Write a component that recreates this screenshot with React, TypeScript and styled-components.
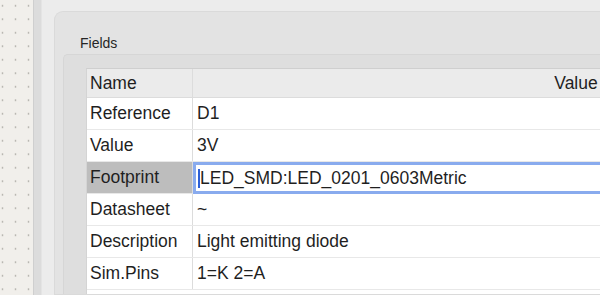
import React from "react";
import styled, { createGlobalStyle } from "styled-components";

const Global = createGlobalStyle`
  html, body { margin: 0; padding: 0; width: 600px; height: 295px; overflow: hidden; }
  body { font-family: "Liberation Sans", Arial, sans-serif; background: #ececec; }
`;

const Screen = styled.div`
  display: flex;
  width: 600px;
  height: 295px;
  overflow: hidden;
`;

const Canvas = styled.div`
  flex: 0 0 33px;
  background-color: #f1efeb;
  background-image: radial-gradient(circle, #b9b7b2 0.8px, transparent 1.2px);
  background-size: 13px 13.5px;
  background-position: -4px -1px;
`;

const Splitter = styled.div`
  flex: 0 0 7px;
  background: #dcdcdc;
  border-left: 1px solid #cfcfcf;
  border-right: 1px solid #e4e4e4;
`;

const Window = styled.div`
  flex: 1;
  background: #ececec;
  padding: 11px 0 0 12px;
  display: flex;
  min-width: 0;
`;

const Panel = styled.div`
  flex: 1;
  background: #e3e3e3;
  border: 1px solid #dadada;
  border-right: none;
  border-radius: 9px 0 0 0;
  padding: 23px 0 0 8px;
  display: flex;
  flex-direction: column;
  min-width: 0;
`;

const Legend = styled.div`
  font-size: 14px;
  color: #262626;
  padding-left: 17px;
  height: 19px;
  line-height: 17px;
`;

const Frame = styled.div`
  flex: 1;
  background: #dedede;
  border-top: 1px solid #d6d6d6;
  border-left: 1px solid #d6d6d6;
  border-radius: 5px 0 0 0;
  padding: 13px 0 0 22px;
  min-width: 0;
  overflow: hidden;
`;

const Table = styled.div`
  width: 868px;
  background: #ffffff;
  border-top: 1px solid #cfcfcf;
  border-left: 1px solid #d4d4d4;
  height: 300px;
`;

const Row = styled.div<{ $header?: boolean }>`
  display: grid;
  grid-template-columns: 106px 1fr;
  height: ${(p) => (p.$header ? "28px" : "31px")};
  border-bottom: 1px solid ${(p) => (p.$header ? "#dcdcdc" : "#e8e8e8")};
  background: ${(p) => (p.$header ? "#ebebeb" : "#ffffff")};
`;

const Cell = styled.div<{ $selected?: boolean; $center?: boolean }>`
  display: flex;
  align-items: center;
  justify-content: ${(p) => (p.$center ? "center" : "flex-start")};
  padding-left: ${(p) => (p.$center ? "0" : "3px")};
  font-size: 17.5px;
  color: #1f1f1f;
  white-space: nowrap;
  background: ${(p) => (p.$selected ? "#bdbdbd" : "transparent")};
  border-right: 1px solid #dcdcdc;
`;

const ValueCell = styled(Cell)`
  padding-left: 4px;
  border-right: none;
`;

const Editor = styled.div`
  display: flex;
  align-items: center;
  margin: 0 0 -1px 0;
  padding-left: 2px;
  border: 3px solid #89abee;
  border-right: none;
  background: #ffffff;
  font-size: 17.5px;
  color: #1f1f1f;
  white-space: nowrap;
`;

const Caret = styled.span`
  display: inline-block;
  width: 2px;
  height: 19px;
  background: #2d5fd6;
`;

const fields: [string, string][] = [
  ["Reference", "D1"],
  ["Value", "3V"],
  ["Footprint", "LED_SMD:LED_0201_0603Metric"],
  ["Datasheet", "~"],
  ["Description", "Light emitting diode"],
  ["Sim.Pins", "1=K 2=A"],
];

export default function App() {
  return (
    <>
      <Global />
      <Screen>
        <Canvas />
        <Splitter />
        <Window>
          <Panel>
            <Legend>Fields</Legend>
            <Frame>
              <Table>
                <Row $header>
                  <Cell>Name</Cell>
                  <ValueCell $center>Value</ValueCell>
                </Row>
                {fields.map(([name, value]) =>
                  name === "Footprint" ? (
                    <Row key={name}>
                      <Cell $selected>{name}</Cell>
                      <Editor>
                        <Caret />
                        {value}
                      </Editor>
                    </Row>
                  ) : (
                    <Row key={name}>
                      <Cell>{name}</Cell>
                      <ValueCell>{value}</ValueCell>
                    </Row>
                  )
                )}
              </Table>
            </Frame>
          </Panel>
        </Window>
      </Screen>
    </>
  );
}
